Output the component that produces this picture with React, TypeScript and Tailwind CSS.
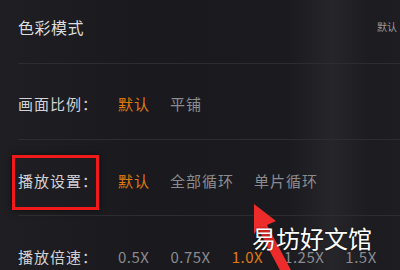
import { ReactNode } from 'react';

const font = { fontFamily: '"Noto Sans CJK SC", "Noto Sans", sans-serif' };

const Row = ({ label, children, className }: { label: string; children: ReactNode; className: string }) => (
  <div className={`flex items-center border-b border-[#2c2c31] ${className}`}>
    <div className="w-[100px] shrink-0 text-[15px] leading-none tracking-[1px] text-[#d2d2d4]">{label}</div>
    <div className="flex items-center gap-[20px] text-[15px] leading-none tracking-[1px]">{children}</div>
  </div>
);

const Opt = ({ on, children }: { on?: boolean; children: ReactNode }) => (
  <span className={on ? 'text-[#e07a0e]' : 'text-[#8b8b8f]'}>{children}</span>
);

export default function App() {
  return (
    <div
      style={font}
      className="relative w-[400px] h-[270px] overflow-hidden bg-[linear-gradient(90deg,#1f1f23_0%,#1a1a1e_35%,#1b1b1f_72%,#25252a_83%,#1c1c20_93%,#1e1e22_100%)]"
    >
      <div className="ml-[18px]">
        <div className="flex h-[64px] items-start justify-between border-b border-[#2c2c31] pt-[19px]">
          <span className="text-[16px] leading-none tracking-[0.5px] text-[#dcdcde]">色彩模式</span>
          <span className="mt-[3px] mr-[3px] text-[10px] leading-none text-[#9a9a9e]">默认</span>
        </div>
        <Row label="画面比例：" className="h-[76px] pt-[4px]">
          <Opt on>默认</Opt>
          <Opt>平铺</Opt>
        </Row>
        <Row label="播放设置：" className="h-[76px] pt-[6px]">
          <Opt on>默认</Opt>
          <Opt>全部循环</Opt>
          <Opt>单片循环</Opt>
        </Row>
        <div className="flex h-[80px] items-start pt-[33px]">
          <div className="w-[100px] shrink-0 text-[15px] leading-none tracking-[1px] text-[#d2d2d4]">播放倍速：</div>
          <div className="flex items-center gap-[21px] text-[15px] leading-none tracking-[0.5px]">
            <Opt>0.5X</Opt>
            <Opt>0.75X</Opt>
            <Opt on>1.0X</Opt>
            <Opt>1.25X</Opt>
            <Opt>1.5X</Opt>
          </div>
        </div>
      </div>

      {/* annotation box */}
      <div className="absolute left-[12px] top-[155px] h-[55px] w-[87px] border-[3px] border-[#f01a1a] shadow-[0_0_6px_rgba(0,0,0,0.6)]" />

      {/* annotation arrow */}
      <svg className="absolute left-[240px] top-[198px]" width="60" height="72" viewBox="0 0 60 72">
        <polygon points="14,6 36,23 27,27 52,74 41,74 18,31 14,36" fill="#ee2b2b" />
      </svg>

      {/* watermark */}
      <div className="absolute left-[252px] top-[226px] text-[24px] leading-none text-white [text-shadow:0_0_2px_rgba(0,0,0,0.6)]">
        易坊好文馆
      </div>
    </div>
  );
}
